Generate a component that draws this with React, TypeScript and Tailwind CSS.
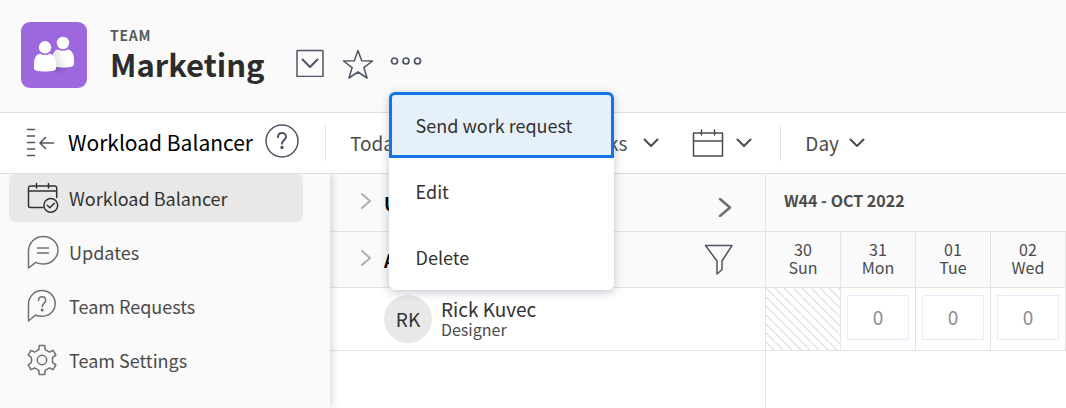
import type { ReactNode } from "react";

function TeamLogo() {
  return (
    <svg viewBox="0 0 66 66" className="size-[66px] shrink-0" aria-hidden="true">
      <defs>
        <linearGradient id="back" x1="0" x2="1" y1="0.6" y2="0.4">
          <stop offset="0" stopColor="#dcdcdc" />
          <stop offset="0.6" stopColor="#fff" />
        </linearGradient>
        <radialGradient id="shade">
          <stop offset="0" stopColor="#5b3490" stopOpacity="0.4" />
          <stop offset="1" stopColor="#5b3490" stopOpacity="0" />
        </radialGradient>
      </defs>
      <rect width="66" height="66" rx="9" fill="#9d68dd" />
      <ellipse cx="37" cy="46" rx="11" ry="6" fill="url(#shade)" />
      <circle cx="42" cy="21" r="6.2" fill="#fff" />
      <path d="M31.500 37c0-6 2-9 5.500-9.500 3 1.700 7 1.700 10 0 4 .8 6 5 6 10v4.500c0 1.500-1 2.300-2.500 2.700-4 1-12 1-16.500.3-1.500-.3-2.500-1-2.500-2.500z" fill="url(#back)" />
      <circle cx="24" cy="25.300" r="6.200" fill="#fff" />
      <path d="M13 42c0-6 2-9.500 6-10.200 3 1.700 7 1.700 10 0 4 .8 6 4.500 6 10.200v4c0 1.500-1 2.300-2.500 2.700-4.500 1-12.500 1-17 0-1.500-.4-2.500-1.200-2.500-2.700z" fill="#fff" />
    </svg>
  );
}

function Svg({ w, h, sw = "1.4", className = "", children }: { w: number; h: number; sw?: string; className?: string; children: ReactNode }) {
  return (
    <svg width={w} height={h} viewBox={`0 0 ${w} ${h}`} fill="none" stroke="currentColor" strokeWidth={sw} strokeLinecap="round" strokeLinejoin="round" className={`shrink-0 ${className}`} aria-hidden="true">
      {children}
    </svg>
  );
}

function ChevronDown() {
  return (
    <Svg w={16} h={10} sw="2">
      <path d="M1.500 1.500 8 8l6.500-6.500" />
    </Svg>
  );
}

function CalendarCheck() {
  return (
    <Svg w={32} h={32} sw="1.500">
      <path d="M16 25.500H3.500a2 2 0 0 1-2-2V6a2 2 0 0 1 2-2h24.200a2 2 0 0 1 2 2v9.500M1.500 9h28.200M9.500 1.500V6M21.500 1.500V6" />
      <circle cx="23.800" cy="23.300" r="6.900" />
      <path d="m20.300 23.300 2.500 2.500 4.500-4.500" />
    </Svg>
  );
}

function Bubble({ question = false }: { question?: boolean }) {
  return (
    <Svg w={32} h={34} sw="1.500">
      {question ? (
        <>
          <path d="M1.500 32V15.200C1.500 7.500 7.500 1.500 15 1.500S28.200 7.500 28.200 14.700 22.300 27.300 14.700 27.300c-2.400 0-4.400-.4-6.200-1.300z" />
          <path d="M11.500 11.500c0-2.300 1.600-3.800 3.600-3.800s3.500 1.500 3.500 3.500c0 3.200-3.400 3.200-3.400 6.500" />
          <circle cx="15.200" cy="21" r=".8" fill="currentColor" />
        </>
      ) : (
        <>
          <path d="M1.500 33V16C1.500 7.800 8 1.500 16.300 1.500S31 7.800 31 15.200 24.500 29 16.300 29c-2.700 0-5.200-.5-7.500-1.700z" />
          <path d="M10.500 13h11M10.500 18h11" />
        </>
      )}
    </Svg>
  );
}

// Outline of a six-toothed gear: one tooth's corners turned through 60° steps.
const tooth = [
  [-4, -9.8],
  [-3.1, -10.6],
  [-2.8, -14.4],
  [2.8, -14.4],
  [3.1, -10.6],
  [4, -9.8],
];
const gearPoints = [0, 60, 120, 180, 240, 300]
  .flatMap((deg) => {
    const a = (deg * Math.PI) / 180;
    return tooth.map(([x, y]) => `${(15 + x * Math.cos(a) - y * Math.sin(a)).toFixed(2)},${(16 + x * Math.sin(a) + y * Math.cos(a)).toFixed(2)}`);
  })
  .join(" ");

function Gear() {
  return (
    <Svg w={32} h={32} sw="1.500">
      <polygon points={gearPoints} />
      <circle cx="15" cy="16" r="4.700" />
    </Svg>
  );
}

const nav = [
  { label: "Workload Balancer", icon: <CalendarCheck />, active: true },
  { label: "Updates", icon: <Bubble />, active: false },
  { label: "Team Requests", icon: <Bubble question />, active: false },
  { label: "Team Settings", icon: <Gear />, active: false },
];

const days = [
  { num: "30", name: "Sun" },
  { num: "31", name: "Mon" },
  { num: "01", name: "Tue" },
  { num: "02", name: "Wed" },
];

function Header() {
  return (
    <header className="relative z-30 flex h-[113px] items-start border-b border-[#dedede] bg-[#fafafa] pt-[22px] pl-[21px]">
      <TeamLogo />
      <div className="ml-[23px]">
        <p className="pt-0.5 text-sm leading-[22px] font-bold tracking-wider text-[#5a5a5a]">TEAM</p>
        <h1 className="text-[31px] leading-9 font-bold text-[#2c2c2c]">Marketing</h1>
      </div>
      <div className="ml-[31px] flex items-start pt-[26px] text-[#505565]">
        <button type="button" aria-label="Team options" className="pt-px">
          <Svg w={28} h={28} sw="1.500">
            <rect x="1" y="1.500" width="26" height="26" rx=".5" />
            <path d="M6.500 10.500 14 18l7.500-7.500" strokeWidth="2" />
          </Svg>
        </button>
        <button type="button" aria-label="Add to favorites" className="ml-[18px] pt-px">
          <Svg w={32} h={30} sw="1.500">
            <path d="m16 1.500 3.700 10.300 10.800.2-8.600 6.700 3.200 10.300-9.100-6-9.100 6 3.200-10.300L1.500 12l10.800-.2z" />
          </Svg>
        </button>
        <div className="relative ml-4">
          <button type="button" aria-label="More actions" aria-haspopup="menu" aria-expanded="true" className="block pt-2">
            <Svg w={32} h={10} sw="1.700">
              <circle cx="4.500" cy="5" r="3" />
              <circle cx="16" cy="5" r="3" />
              <circle cx="27.500" cy="5" r="3" />
            </Svg>
          </button>
          <div role="menu" className="absolute top-11 -left-px flex w-[225px] flex-col rounded-md bg-white text-lg whitespace-nowrap text-[#323232] shadow-[0_2px_10px_rgba(40,60,90,0.3)]">
            <button type="button" role="menuitem" className="h-[66px] rounded-t-md border-[3px] border-[#1473e6] bg-[#e6f0fa] px-6 text-left">Send work request</button>
            <button type="button" role="menuitem" className="h-[66px] px-[27px] text-left">Edit</button>
            <button type="button" role="menuitem" className="h-[66px] px-[27px] text-left">Delete</button>
          </div>
        </div>
      </div>
    </header>
  );
}

function Toolbar() {
  return (
    <div className="relative z-20 flex h-[61px] items-center border-b border-[#dedede] bg-white text-[19px] text-[#4b4b4b]">
      <div className="flex w-[325px] shrink-0 items-center pl-[26px]">
        <button type="button" aria-label="Collapse sidebar" className="text-[#505565]">
          <Svg w={30} h={30} sw="1.600">
            <path d="M1.500 1.500h7M1.500 8h7M1.500 14.500h7M1.500 21h7M1.500 27.500h7M14 15h13.500M19.500 9.500 14 15l5.500 5.500" />
          </Svg>
        </button>
        <h2 className="ml-3 text-[21px] whitespace-nowrap text-black">Workload Balancer</h2>
        <button type="button" aria-label="Help" className="ml-3 text-[#505565]">
          <Svg w={34} h={34} sw="1.500" className="-mt-1">
            <circle cx="17" cy="17" r="16" />
            <path d="M13 13.300c0-2.800 1.800-4.300 4-4.300s4 1.600 4 3.800c0 3.500-4 3.500-4 7" strokeWidth="2" />
            <circle cx="17" cy="23.600" r="1" fill="currentColor" />
          </Svg>
        </button>
      </div>
      <div className="h-9 w-px shrink-0 bg-[#e4e4e4]" />
      <button type="button" className="ml-6">Today</button>
      <button type="button" className="ml-auto flex shrink-0 items-center gap-4 whitespace-nowrap">4 Weeks<ChevronDown /></button>
      <button type="button" aria-label="Choose date" className="ml-[33px] flex items-center gap-3">
        <Svg w={32} h={28} sw="1.500">
          <path d="M1.500 4h29v23h-29zM1.500 12h29M9.500 1v5M22.500 1v5" />
        </Svg>
        <ChevronDown />
      </button>
      <div className="ml-7 h-9 w-px shrink-0 bg-[#e4e4e4]" />
      <button type="button" className="mr-[201px] ml-6 flex items-center gap-2.5">Day<ChevronDown /></button>
    </div>
  );
}

function Sidebar() {
  return (
    <nav className="relative z-10 w-[330px] shrink-0 bg-[#fafafa] shadow-[2px_0_8px_rgba(40,60,90,0.2)]">
      <ul className="flex flex-col gap-1.5 pr-[27px] pl-[9px]">
        {nav.map((item) => (
          <li key={item.label}>
            <a href="#" className={item.active ? "flex h-12 items-center gap-2.5 rounded-md bg-[#e8e8e8] pl-[18px] text-lg text-[#323232]" : "flex h-12 items-center gap-2.5 pl-[18px] text-lg text-[#4b4b4b]"}>
              <span className={item.active ? "" : "text-[#707070]"}>{item.icon}</span>
              {item.label}
            </a>
          </li>
        ))}
      </ul>
    </nav>
  );
}

function GroupLabel({ text }: { text: string }) {
  return (
    <button type="button" className="flex items-center gap-3 text-lg font-bold text-black">
      <Svg w={12} h={18} sw="2" className="-mt-1 text-[#b0b0b0]">
        <path d="m2 2 8 7-8 7" />
      </Svg>
      {text}
    </button>
  );
}

function Schedule() {
  return (
    <main className="flex min-w-0 flex-1 flex-col bg-white">
      <table className="w-full table-fixed border-separate border-spacing-0 text-[#4b4b4b]">
        <colgroup>
          <col />
          <col className="w-[75px]" />
          <col className="w-[75px]" />
          <col className="w-[75px]" />
          <col className="w-[75px]" />
        </colgroup>
        <thead>
          <tr className="h-[58px] bg-[#fafafa]">
            <th className="border-r border-b border-[#e4e4e4] p-0 pr-[33px] pl-[30px] font-normal">
              <div className="flex items-center justify-between">
                <GroupLabel text="Unassigned Work" />
                <button type="button" aria-label="Expand" className="pt-2 text-[#707070]">
                  <Svg w={14} h={20} sw="2.500">
                    <path d="m2 2 10 8.500L2 19" />
                  </Svg>
                </button>
              </div>
            </th>
            <th colSpan={4} className="border-b border-[#e4e4e4] p-0 pb-1.5 pl-[18px] text-left text-base font-bold">W44 - OCT 2022</th>
          </tr>
          <tr className="h-14 bg-[#fafafa]">
            <th className="border-r border-b border-[#e4e4e4] p-0 pr-[31px] pl-[30px] font-normal">
              <div className="flex items-center justify-between">
                <GroupLabel text="Assigned Work" />
                <button type="button" aria-label="Filter" className="text-[#505565]">
                  <Svg w={30} h={32} sw="1.500">
                    <path d="M1.500 1.500h26.500L18 17v8.500l-5 4.500V17z" />
                  </Svg>
                </button>
              </div>
            </th>
            {days.map((d) => (
              <th key={d.num} className="border-r border-b border-[#e4e4e4] p-0 pb-1 text-base leading-[18px] font-normal">
                {d.num}
                <br />
                {d.name}
              </th>
            ))}
          </tr>
        </thead>
        <tbody>
          <tr className="h-[63px]">
            <td className="border-r border-b border-[#e4e4e4] p-0 pl-[54px]">
              <div className="flex items-center gap-[9px]">
                <span className="flex size-12 items-center justify-center rounded-full bg-[#e8e8e8] text-[19px] text-[#323232]">RK</span>
                <div className="pb-0.5">
                  <p className="text-[19px] leading-[22px] text-[#323232]">Rick Kuvec</p>
                  <p className="text-base leading-[18px]">Designer</p>
                </div>
              </div>
            </td>
            <td className="border-r border-b border-[#e4e4e4] bg-[linear-gradient(45deg,transparent_42%,#dcdcdc_50%,transparent_58%)] bg-[length:9px_9px] p-0" />
            {days.slice(1).map((d) => (
              <td key={d.num} className="border-r border-b border-[#e4e4e4] p-0 px-1.5 pb-1">
                <div className="flex h-[45px] items-center justify-center border border-[#e3eefa] text-[19px] text-[#8e8e8e]">0</div>
              </td>
            ))}
          </tr>
        </tbody>
      </table>
      <div className="mr-[300px] flex-1 border-r border-[#e4e4e4]" />
    </main>
  );
}

export default function App() {
  return (
    <div className="flex min-h-screen flex-col overflow-hidden bg-white font-['Noto_Sans_CJK_SC','Noto_Sans',sans-serif]">
      <Header />
      <Toolbar />
      <div className="flex flex-1">
        <Sidebar />
        <Schedule />
      </div>
    </div>
  );
}
